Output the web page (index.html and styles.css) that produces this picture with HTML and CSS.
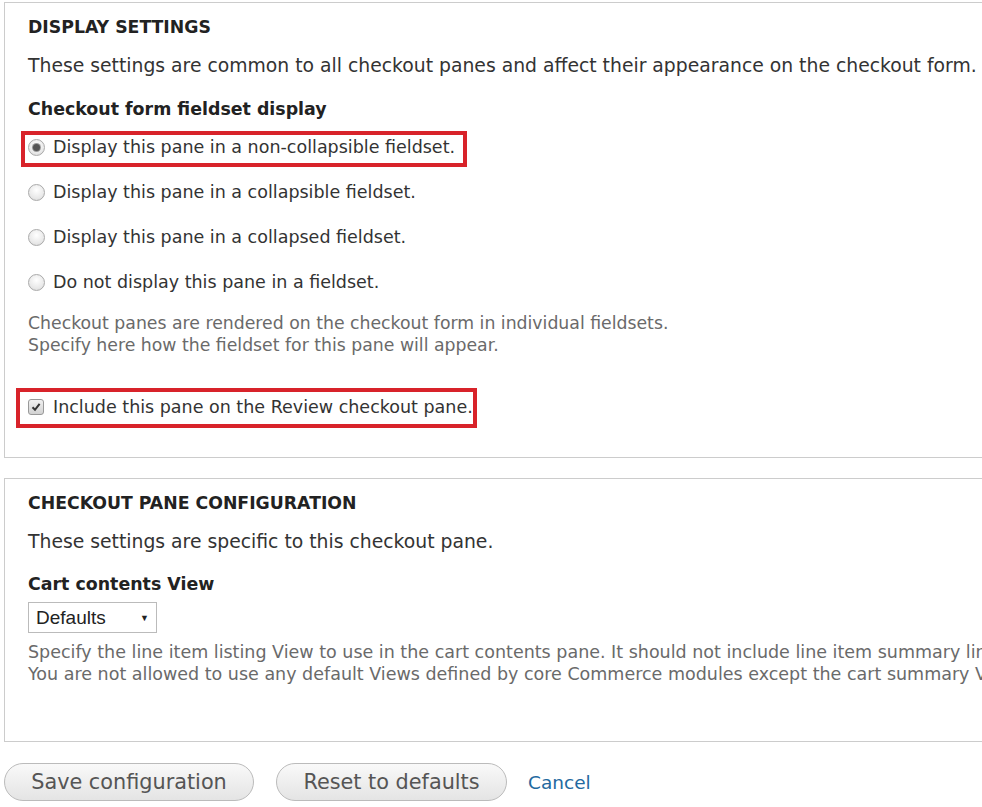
FILE: index.html
```html
<!DOCTYPE html>
<html>
<head>
<meta charset="utf-8">
<link rel="stylesheet" href="styles.css">
</head>
<body>
<div class="page">
  <fieldset class="box box-display">
    <h2 class="legend">DISPLAY SETTINGS</h2>
    <p class="intro">These settings are common to all checkout panes and affect their appearance on the checkout form.</p>
    <h3 class="label">Checkout form fieldset display</h3>
    <div class="options">
      <div class="opt highlight hl-radio"><span class="radio checked"></span><span>Display this pane in a non-collapsible fieldset.</span></div>
      <div class="opt opt-first"><span class="radio"></span><span>Display this pane in a collapsible fieldset.</span></div>
      <div class="opt"><span class="radio"></span><span>Display this pane in a collapsed fieldset.</span></div>
      <div class="opt"><span class="radio"></span><span>Do not display this pane in a fieldset.</span></div>
    </div>
    <p class="desc">Checkout panes are rendered on the checkout form in individual fieldsets.<br>Specify here how the fieldset for this pane will appear.</p>
    <div class="opt highlight hl-check"><span class="check"><svg width="10" height="10" viewBox="0 0 10 10"><path d="M1.5 5.2 L4 7.8 L8.6 1.8" fill="none" stroke="#333" stroke-width="2"/></svg></span><span>Include this pane on the Review checkout pane.</span></div>
  </fieldset>

  <fieldset class="box box-config">
    <h2 class="legend">CHECKOUT PANE CONFIGURATION</h2>
    <p class="intro intro-config">These settings are specific to this checkout pane.</p>
    <h3 class="label label-cart">Cart contents View</h3>
    <div class="select"><span>Defaults</span><span class="arrow">▼</span></div>
    <p class="desc desc-nowrap">Specify the line item listing View to use in the cart contents pane. It should not include line item summary links or any Views defined by core Commerce modules.<br>You are not allowed to use any default Views defined by core Commerce modules except the cart summary View.</p>
  </fieldset>

  <div class="actions">
    <button class="btn btn-save">Save configuration</button>
    <button class="btn btn-reset">Reset to defaults</button>
    <a class="cancel" href="#">Cancel</a>
  </div>
</div>
</body>
</html>
```

FILE: styles.css
```css
html, body {
  margin: 0;
  padding: 0;
  background: #fff;
  overflow: hidden;
}
body {
  font-family: "DejaVu Sans", "Lucida Grande", sans-serif;
  color: #333;
  width: 982px;
  height: 807px;
}
.page {
  padding: 2px 0 0 4px;
  width: 1200px;
}
.box {
  margin: 0;
  border: 1px solid #ccc;
  padding: 0 0 0 23px;
  min-width: 0;
  box-sizing: border-box;
}
.box-display {
  height: 456px;
}
.box-config {
  margin-top: 20px;
  height: 264px;
}
.legend {
  margin: 14px 0 0;
  font-size: 17.3px;
  font-weight: bold;
  line-height: 20px;
  color: #222;
}
.intro {
  margin: 18px 0 0;
  font-size: 18.8px;
  line-height: 22px;
  color: #333;
  white-space: nowrap;
}
.intro-config {
  margin-top: 18px;
}
.label {
  margin: 21px 0 0;
  font-size: 17.4px;
  font-weight: bold;
  line-height: 22px;
  color: #222;
}
.options {
  display: flex;
  flex-direction: column;
  margin-top: 11px;
}
.opt {
  display: flex;
  align-items: center;
  font-size: 17.5px;
  line-height: 22px;
  color: #333;
  white-space: nowrap;
}
.opt + .opt {
  margin-top: 23px;
}
.options .opt-first {
  margin-top: 14px;
}
.highlight {
  border: 4px solid #d8232a;
  width: max-content;
}
.hl-radio {
  margin-left: -7px;
  padding: 1px 8px 5px 3px;
}
.hl-check {
  margin-top: 32px;
  margin-left: -12px;
  padding: 4px 0 6px 8px;
}
.radio {
  width: 17px;
  height: 17px;
  border-radius: 50%;
  border: 1px solid #aaa;
  box-sizing: border-box;
  background: radial-gradient(circle at 50% 35%, #fff 0%, #e8e8e8 65%, #d2d2d2 100%);
  display: flex;
  align-items: center;
  justify-content: center;
  margin-right: 8px;
  flex: none;
}
.radio.checked::after {
  content: "";
  width: 7px;
  height: 7px;
  border-radius: 50%;
  background: #555;
  box-shadow: 0 0 0 1px #999;
}
.check {
  width: 16px;
  height: 16px;
  border-radius: 3px;
  border: 1px solid #999;
  box-sizing: border-box;
  background: linear-gradient(#f0f0f0, #d2d2d2);
  display: flex;
  align-items: center;
  justify-content: center;
  margin-right: 9px;
  flex: none;
}
.desc {
  margin: 19px 0 0;
  font-size: 17.3px;
  line-height: 22px;
  color: #6a6a6a;
}
.desc-nowrap {
  white-space: nowrap;
  margin-top: 8px;
  font-size: 17.5px;
}
.label-cart {
  margin-top: 20px;
}
.select {
  margin-top: 7px;
  width: 129px;
  height: 31px;
  box-sizing: border-box;
  border: 1px solid #bbb;
  display: flex;
  align-items: center;
  justify-content: space-between;
  padding: 0 7px 0 7px;
  font-family: "Liberation Sans", Arial, sans-serif;
  font-size: 19px;
  color: #222;
}
.select .arrow {
  font-size: 9px;
}
.actions {
  display: flex;
  align-items: center;
  margin-top: 21px;
}
.btn {
  font-family: "DejaVu Sans", sans-serif;
  font-size: 20.8px;
  color: #555;
  height: 38px;
  border: 1px solid #bbb;
  border-radius: 19px;
  background: linear-gradient(#f9f9f9, #e4e4e4);
  padding: 0;
  margin: 0;
}
.btn-save {
  width: 250px;
}
.btn-reset {
  margin-left: 22px;
  width: 231px;
}
.cancel {
  margin-left: 21px;
  font-size: 18.5px;
  color: #2369a0;
  text-decoration: none;
}
```
